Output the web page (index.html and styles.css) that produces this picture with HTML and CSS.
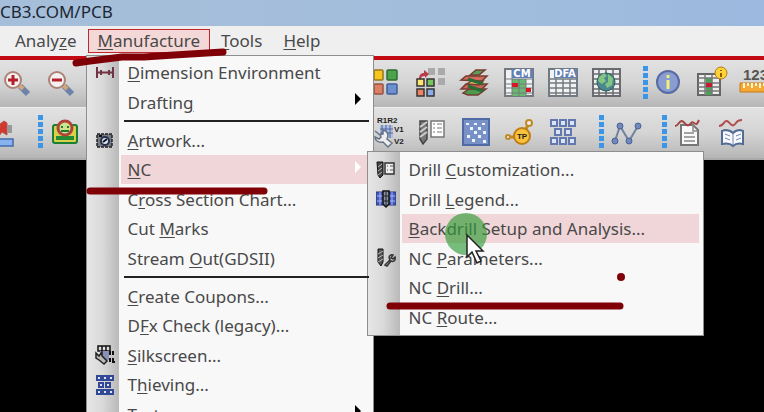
FILE: index.html
```
<!DOCTYPE html>
<html lang="en">
<head>
  <meta charset="UTF-8" />
  <meta name="viewport" content="width=device-width, initial-scale=1.0"/>
  <title>PCB</title>
  <link rel="stylesheet" href="styles.css">
</head>
<body>
  <header class="titlebar">CB3.COM/PCB</header>

  <nav class="menubar">
    <button class="menu-title">Analy<u>z</u>e</button>
    <div class="menu-wrap">
      <button class="menu-title open"><u>M</u>anufacture</button>
      <ul class="menu main-menu">
        <li>
          <svg class="mi" viewBox="0 0 20 20"><path d="M2 4v11M18 4v11M3 9.500h14M6 7v5M14 7v5" fill="none" stroke="#703444" stroke-width="2"/></svg>
          <button><u>D</u>imension Environment</button>
        </li>
        <li><button>Draftin<u>g</u></button><span class="arrow"></span></li>
        <li class="sep"></li>
        <li>
          <svg class="mi" viewBox="0 0 20 20"><path d="M2 4h15v13H2z" fill="#777b82" stroke="#222" stroke-width="1.500" stroke-dasharray="3 1"/><circle cx="10" cy="11" r="4" fill="#dfe6f5" stroke="#26304f" stroke-width="2"/><path d="M8 12l4-3M4 6h3" stroke="#111" stroke-width="2"/></svg>
          <button><u>A</u>rtwork...</button>
        </li>
        <li class="active">
          <button><u>N</u>C</button><span class="arrow light"></span>
          <ul class="menu sub-menu">
            <li>
              <svg class="mi" viewBox="0 0 20 20"><path d="M1 2h6v13l-3 3-2-3z" fill="#444" stroke="#111"/><path d="M2 7l4-3M2 11l4-3M2 15l4-3" stroke="#bbb"/><path d="M9 3h9v11H9z" fill="#eee" stroke="#333" stroke-width="1.500"/><path d="M11 6h1M14 6h3M11 10h1M14 10h3" stroke="#555"/></svg>
              <button>Drill <u>C</u>ustomization...</button>
            </li>
            <li>
              <svg class="mi" viewBox="0 0 20 20"><path d="M0 3h20v13H0z" fill="#4559bd" stroke="#27377b"/><path d="M1 7h18M1 12h18M4 3v13M16 3v13" stroke="#a9b8f4"/><path d="M7 2h6v13l-3 3-3-3z" fill="#8b93a5" stroke="#111" stroke-width="1.500"/><path d="M10 3v14M7 7h6M7 12h6" stroke="#222"/></svg>
              <button>Drill <u>L</u>egend...</button>
            </li>
            <li class="active"><button><u>B</u>ackdrill Setup and Analysis...</button></li>
            <li>
              <svg class="mi" viewBox="0 0 20 20"><path d="M2 1h5v13l-2 4-3-4z" fill="#555" stroke="#111"/><path d="M2 6l5-3M2 10l5-3M2 14l5-3" stroke="#bbb"/><path d="M9 17l5-5c-2-3 0-6 3-5l-2 3 2 1 2-2c1 4-2 5-4 4l-4 5z" fill="#ddd" stroke="#333" stroke-width="1.500"/></svg>
              <button>NC <u>P</u>arameters...</button>
            </li>
            <li><button>NC <u>D</u>rill...</button></li>
            <li><button>NC <u>R</u>oute...</button></li>
          </ul>
        </li>
        <li><button>C<u>r</u>oss Section Chart...</button></li>
        <li><button>Cut <u>M</u>arks</button></li>
        <li><button>Stream <u>O</u>ut(GDSII)</button></li>
        <li class="sep"></li>
        <li><button><u>C</u>reate Coupons...</button></li>
        <li><button>D<u>F</u>x Check (legacy)...</button></li>
        <li>
          <svg class="mi" viewBox="0 0 20 20"><path d="M3 1h12v5H3zM7 1v5M11 1v5" fill="#ddd" stroke="#111" stroke-width="1.500"/><path d="M5 6h9v9H5z" fill="#8a8fb6"/><path d="M1 8v5l3 2 5 4 3-3-5-5V7l-3 4z" fill="#bbb" stroke="#222" stroke-width="1.500"/><path d="M15 6v4M18 6v4M15 13v4M18 13v4h2" stroke="#111" stroke-width="2" fill="none"/></svg>
          <button><u>S</u>ilkscreen...</button>
        </li>
        <li>
          <svg class="mi" viewBox="0 0 20 20"><path d="M2 1h4v4H2zM8 1h4v4H8zM14 1h4v4h-4zM4 8h4v4H4zM11 8h4v4h-4zM2 15h4v4H2zM8 15h4v4H8zM14 15h4v4h-4z" fill="#dce4ff" stroke="#304896" stroke-width="2"/></svg>
          <button>T<u>h</u>ieving...</button>
        </li>
        <li><button>T<u>e</u>stprep</button><span class="arrow"></span></li>
      </ul>
    </div>
    <button class="menu-title"><u>T</u>ools</button>
    <button class="menu-title"><u>H</u>elp</button>
  </nav>

  <div class="toolbar">
    <div class="dock view">
      <button class="tool" aria-label="Zoom in"><svg viewBox="0 0 30 30"><path d="M19 18l8 8" stroke="#6f83aa" stroke-width="6"/><path d="M18 17l4 4" stroke="#d2a878" stroke-width="4"/><circle cx="12" cy="12" r="8" fill="#f6f1f1" stroke="#ac8378" stroke-width="2"/><path d="M12 7v10M7 12h10" stroke="#b3202b" stroke-width="3"/></svg></button>
      <button class="tool" aria-label="Zoom out"><svg viewBox="0 0 30 30"><path d="M19 18l8 8" stroke="#6f83aa" stroke-width="6"/><path d="M18 17l4 4" stroke="#d2a878" stroke-width="4"/><circle cx="12" cy="12" r="8" fill="#f6f1f1" stroke="#ac8378" stroke-width="2"/><path d="M7 12h10" stroke="#b3202b" stroke-width="3"/></svg></button>
    </div>
    <button class="tool" aria-label="Color"><svg viewBox="0 0 30 30"><g stroke-width="1.500"><rect x="2" y="2" width="9" height="10" rx="1" fill="#f8c51f" stroke="#987719"/><rect x="15" y="2" width="10" height="10" rx="1" fill="#4da34b" stroke="#306d35"/><rect x="2" y="16" width="9" height="10" rx="1" fill="#db8062" stroke="#985241"/><rect x="15" y="16" width="10" height="10" rx="1" fill="#6d91d0" stroke="#415e95"/></g></svg></button>
    <button class="tool" aria-label="Shadow mode"><svg viewBox="0 0 30 30"><path d="M12 0h7v7h-7zM22 0h7v7h-7zM22 10h7v7h-7z" fill="#aaa"/><path d="M3 11c0-4 2-6 5-6V2l5 4-4 4V8c-3 0-4 1-4 3z" fill="#b93b48"/><g stroke="#333" stroke-width="1.500"><path d="M1 11h7v7H1z" fill="#ffe46e"/><path d="M11 11h7v7h-7z" fill="#74c65a"/><path d="M1 21h7v7H1z" fill="#ee8262"/><path d="M11 21h7v7h-7z" fill="#8aade9"/></g></svg></button>
    <button class="tool" aria-label="Cross section"><svg viewBox="0 0 30 30"><g stroke="#753c32" stroke-width="1.500"><path d="M3 25l6-4h17l-8 6H8z" fill="#4c9b4b"/><path d="M1 21l5-5h21l-5 5z" fill="#cf6257"/><path d="M7 16l4-3h12l-4 4z" fill="#d3b95d"/><path d="M1 12l5-4h21l-5 5z" fill="#d36b5c"/><path d="M10 7l6-5h9l-6 5z" fill="#5ca057"/></g><path d="M8 11l15 5M8 18l15 5" stroke="#286b34" stroke-width="3"/></svg></button>
    <button class="tool" aria-label="Constraint manager"><svg viewBox="0 0 30 30"><path d="M1 1h28v27H1z" fill="#f2f2f2" stroke="#737980" stroke-width="2"/><path d="M8 11h14v17H8z" fill="#68b86f"/><path d="M1 11h28M1 16h28M1 20h28M1 25h28M8 1v27M15 11v17M22 11v17" stroke="#747b80"/><path d="M8 1h21v9H8z" fill="#6380b4"/><path d="M8 15h6v4H8zM22 20h5v4h-5z" fill="#d51726"/><text class="glyph-label" x="18" y="9" text-anchor="middle" fill="#fff">CM</text></svg></button>
    <button class="tool" aria-label="DFA"><svg viewBox="0 0 30 30"><path d="M1 1h28v27H1z" fill="#f2f2f2" stroke="#737980" stroke-width="2"/><path d="M1 11h28M1 15h28M1 20h28M1 25h28M8 1v27M15 11v17M22 11v17" stroke="#747b80" stroke-width="1.500"/><path d="M6 1h23v9H6z" fill="#6380b4"/><text class="glyph-label" x="17" y="9" text-anchor="middle" fill="#fff">DFA</text></svg></button>
    <button class="tool" aria-label="Global"><svg viewBox="0 0 30 30"><path d="M1 1h27v27H1z" fill="#eee" stroke="#686b70" stroke-width="2"/><path d="M1 6h27M1 11h27M1 16h27M1 21h27M1 25h27M7 1v27M14 1v27M21 1v27" stroke="#686b70" stroke-width="1.500"/><circle cx="14" cy="14" r="9" fill="#4b8790" stroke="#275d5b"/><path d="M7 9l5-4 3 3-3 2 2 3-4 3-4-3zM16 6l5 4-1 7-5 3-2-4 3-2z" fill="#83c681"/></svg></button>
    <span class="grip"></span>
    <button class="tool" aria-label="Info"><svg viewBox="0 0 30 30"><circle cx="13" cy="14" r="11" fill="#899dd2" stroke="#596aa3" stroke-width="2"/><path d="M13 7v3M13 12v9" stroke="#f2ef72" stroke-width="3"/></svg></button>
    <button class="tool" aria-label="Status"><svg viewBox="0 0 30 30"><path d="M-1 6h22v21H-1z" fill="#eee" stroke="#666" stroke-width="2"/><path d="M7 10h6v17H7z" fill="#4aa255"/><path d="M-1 10h22M-1 15h22M-1 19h22M-1 23h22M6 6v21M13 6v21" stroke="#777" stroke-width="1.500"/><path d="M7 15h6v4H7z" fill="#c31c2d"/><circle cx="22" cy="5" r="6" fill="#ffd335" stroke="#b17b12"/><path d="M22 2v1M22 5v4" stroke="#8c5b00" stroke-width="2"/></svg></button>
    <button class="tool" aria-label="Measure"><svg viewBox="0 0 30 30"><text class="measure-label" x="0" y="12" fill="#555">123</text><path d="M-3 15h35v9H-3z" fill="#f4a934" stroke="#c87717"/><path d="M1 15v5M5 15v3M9 15v5M13 15v3M17 15v5M21 15v3M25 15v5" stroke="#fff5cf" stroke-width="2"/></svg></button>
  </div>

  <div class="toolbar second">
    <div class="dock edit">
      <button class="tool" aria-label="Push"><svg viewBox="0 0 30 30"><path d="M6 8l7 3V7l4-3 3 2v12l-5-3-3 4-4-3H6z" fill="#d4372c" stroke="#b05750"/><path d="M20 8h5v8h-5z" fill="#999"/><path d="M6 22h20v7H6z" fill="#88b3f0" stroke="#446bad" stroke-width="1.500"/></svg></button>
      <span class="grip"></span>
      <button class="tool" aria-label="Board"><svg viewBox="0 0 30 30"><rect x="3" y="8" width="24" height="18" rx="2" fill="#d8cf4b" stroke="#178032" stroke-width="2"/><path d="M6 19h18v4H6z" fill="#228c35"/><circle cx="15" cy="11" r="7" fill="#cce58b" stroke="#b0433c" stroke-width="3"/><path d="M12 9v2M18 9v2M11 14h8" stroke="#237b31" stroke-width="2"/></svg></button>
    </div>
    <button class="tool" aria-label="Auto rename"><svg viewBox="0 0 30 30"><path d="M8 8h13v13H8z" fill="#b2bfdd"/><path d="M10 8v13M14 8v13M18 8v13M8 12h13M8 16h13" stroke="#4c68a4"/><path d="M3 14l5 4 3-1v-4c5 1 6 5 4 9l5 4-4 4-5-5c-5 1-8-2-8-5l4 2 2-2-1-2z" fill="#eee" stroke="#667486" stroke-width="1.500"/><text class="tiny-label" x="5" y="6">R1R2</text><text class="tiny-label" x="22" y="15">V1</text><text class="tiny-label" x="22" y="27">V2</text></svg></button>
    <button class="tool" aria-label="Drill customization"><svg viewBox="0 0 30 30"><path d="M4 4h7v18l-4 5-3-5z" fill="#777" stroke="#444" stroke-width="1.500"/><path d="M4 10l7-5M4 15l7-5M4 20l7-5" stroke="#ccc" stroke-width="2"/><path d="M15 4h13v16H15z" fill="#fff" stroke="#777" stroke-width="1.500"/><path d="M17 7h2M17 11h2M17 15h2M21 7h5M21 11h5M21 15h5" stroke="#777"/></svg></button>
    <button class="tool" aria-label="Drill legend"><svg viewBox="0 0 30 30"><path d="M3 2h26v26H3z" fill="#7891c7" stroke="#4f6ba7" stroke-width="2"/><path d="M6 6h3v2H6zM14 6h3v2h-3zM22 6h3v2h-3zM10 10h3v3h-3zM18 10h3v3h-3zM14 14h3v3h-3zM23 14h3v3h-3zM7 18h3v3H7zM18 18h3v3h-3zM12 22h3v3h-3zM23 23h3v3h-3z" fill="#eef3ff"/></svg></button>
    <button class="tool" aria-label="Test point"><svg viewBox="0 0 30 30"><path d="M5 20h8M21 14l4-8" stroke="#bf8a24" stroke-width="3"/><circle cx="4" cy="20" r="2" fill="#eee" stroke="#bf8a24" stroke-width="2"/><circle cx="25" cy="6" r="3" fill="#eee" stroke="#bf8a24" stroke-width="2"/><circle cx="18" cy="19" r="8" fill="#fac13b" stroke="#bd7e16" stroke-width="2"/><text class="tiny-label" x="18" y="22" text-anchor="middle">TP</text></svg></button>
    <button class="tool" aria-label="Thieving"><svg viewBox="0 0 30 30"><path d="M3 3h6v6H3zM12 3h6v6h-6zM21 3h6v6h-6zM7 12h6v6H7zM17 12h6v6h-6zM3 21h6v6H3zM12 21h6v6h-6zM21 21h6v6h-6z" fill="#dce5f7" stroke="#6378ae" stroke-width="2"/></svg></button>
    <span class="grip"></span>
    <button class="tool" aria-label="Connect"><svg viewBox="0 0 30 30"><path d="M4 24L9 9l9 15L27 9" fill="none" stroke="#71819f" stroke-width="2"/><g fill="#7188bd" stroke="#4d6292"><circle cx="4" cy="24" r="3"/><circle cx="9" cy="9" r="3"/><circle cx="18" cy="24" r="3"/><circle cx="27" cy="9" r="3"/></g></svg></button>
    <span class="grip"></span>
    <button class="tool" aria-label="Signal report"><svg viewBox="0 0 30 30"><path d="M7 8h12l5 5v15H7z" fill="#f9f9f9" stroke="#777" stroke-width="2"/><path d="M19 8v6h5M10 16h10M10 20h11M10 24h11" fill="none" stroke="#888" stroke-width="1.500"/><path d="M1 9c4 0 4-6 7-5s4 6 7 4 2-4 5-2 3 1 5-3" fill="none" stroke="#a14643" stroke-width="2"/></svg></button>
    <button class="tool" aria-label="Signal library"><svg viewBox="0 0 30 30"><path d="M4 14l3-1c4 0 6 1 8 3 2-2 5-3 7-3l3 1v13c-4-1-7-1-10 2-3-3-7-3-11-2z" fill="#f8faff" stroke="#536c94" stroke-width="2"/><path d="M15 16v12M7 17l5 2M7 21l5 2M18 19l5-2M18 23l5-2" stroke="#7187a8"/><path d="M1 9c5 0 5-6 8-5s4 6 7 4 2-5 8-5" fill="none" stroke="#b14e51" stroke-width="2"/></svg></button>
  </div>

  <!-- pen marks and pointer drawn over the window -->
  <svg class="ink" width="764" height="412" viewBox="0 0 764 412" aria-hidden="true">
    <g fill="none" stroke="#800008" stroke-width="7" stroke-linecap="round" stroke-linejoin="round">
      <path d="M76 63l14-2 32-4h22l30-2 49-3"/>
      <path d="M90 191h174"/>
      <path d="M390 306h230"/>
    </g>
    <circle cx="621" cy="277" r="4" fill="#800008"/>
    <circle cx="466" cy="234" r="21" fill="#2f9b35" fill-opacity=".65"/>
    <path d="M467 235v22l5-5 5 11 4-2-5-10h7z" fill="#fff" stroke="#222" stroke-width="1.500"/>
  </svg>
</body>
</html>
```

FILE: styles.css
```
* { box-sizing: border-box; }
body {
  margin: 0;
  height: 100vh;
  overflow: hidden;
  background: #000;
  color: #494949;
  font-family: "Noto Sans", "Open Sans", sans-serif;
  font-size: 17px;
}
button {
  border: none;
  background: none;
  color: inherit;
  font: inherit;
  padding: 0;
  white-space: nowrap;
}
u { text-underline-offset: 2px; }
.titlebar {
  height: 26px;
  line-height: 24px;
  background: linear-gradient(90deg, #a5bed9 0%, #a2bddc 60%, #9cb9df 100%);
  color: #1c2733;
}
.menubar {
  display: flex;
  align-items: center;
  gap: 1px;
  height: 30px;
  padding-left: 5px;
  background: #efefef;
}
.menu-wrap { position: relative; }
.menu-title {
  display: block;
  height: 24px;
  line-height: 22px;
  padding: 0 9px;
  border: 1px solid transparent;
}
.menu-title.open {
  background: #f4d8d8;
  border-color: #c0272d;
}

/* menus */
.menu {
  position: absolute;
  margin: 0;
  list-style: none;
  border: 1px solid #8e8e8e;
  background: linear-gradient(90deg, #e6e6e6 0, #dadada 15px, #b9b9b9 32px, #f8f8f8 32px);
}
.main-menu {
  top: 26px;
  left: -2px;
  z-index: 2;
  width: 288px;
  padding: 2px 0;
}
.sub-menu {
  top: -4px;
  left: 280px;
  width: 337px;
  padding: 3px 0;
}
.menu li {
  position: relative;
  display: flex;
  align-items: center;
  height: 29px;
  padding-left: 41px;
}
.menu li:nth-child(even) { height: 30px; }
.menu li.active {
  background: linear-gradient(#f0d6d8, #f0d6d8) no-repeat 34px 0 / calc(100% - 38px) 100%;
}
.menu .sep, .menu .sep:nth-child(even) {
  height: 8px;
  padding: 0;
}
.sep::before {
  content: "";
  height: 2px;
  width: 100%;
  margin: 0 4px 0 37px;
  background: #222;
}
.mi {
  position: absolute;
  left: 8px;
  width: 20px;
  height: 20px;
}
.arrow {
  margin: 0 12px 6px auto;
  border: 6px solid transparent;
  border-left-color: #000;
  border-right: none;
}
.arrow.light { border-left-color: #fff; }

/* toolbars */
.toolbar {
  display: flex;
  align-items: center;
  height: 51px;
  padding-bottom: 2px;
  border-top: 4px solid #c30b14;
  background: linear-gradient(#e2e2e2, #d4d4d4 50%, #b6b6b6);
  overflow: hidden;
}
.toolbar.second {
  height: 53px;
  border-top: 1px solid #eee;
  border-bottom: 2px solid #aaa;
}
.dock {
  display: flex;
  align-items: center;
  flex: 0 0 365px;
}
.view .tool:first-child { margin-left: -6px; }
.edit .tool:first-child { margin-left: -20px; }
.tool {
  display: flex;
  justify-content: center;
  flex: 0 0 44px;
}
.tool svg {
  width: 30px;
  height: 30px;
  overflow: visible;
}
.grip {
  flex: 0 0 5px;
  height: 34px;
  margin-left: 14px;
  background: repeating-linear-gradient(#3c96e8 0 5px, transparent 5px 7px);
}
.glyph-label { font: bold 10px "DejaVu Sans", sans-serif; }
.measure-label { font: bold 15px "Liberation Sans", sans-serif; }
.tiny-label { font: bold 8px "Liberation Sans", sans-serif; fill: #222; }

.ink {
  position: absolute;
  top: 0;
  left: 0;
  z-index: 3;
  pointer-events: none;
}
```
